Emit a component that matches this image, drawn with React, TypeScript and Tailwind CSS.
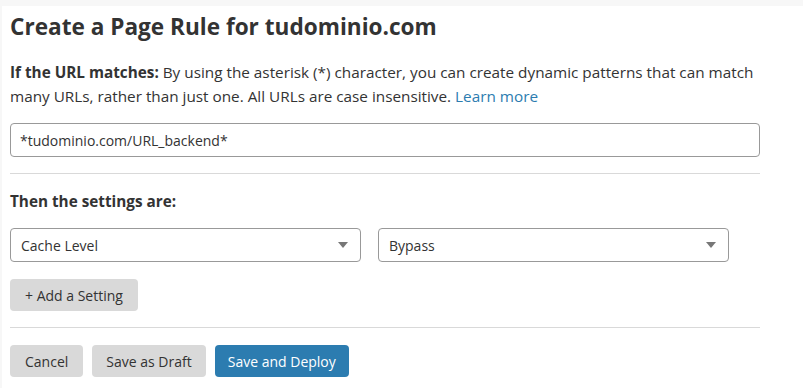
import React from 'react';

const font = { fontFamily: '"Open Sans", "Noto Sans", sans-serif' };

const Caret = () => (
  <svg width="10" height="6" viewBox="0 0 10 6" className="fill-[#777]">
    <path d="M0 0h10L5 6z" />
  </svg>
);

const SelectBox = ({ label }: { label: string }) => (
  <div className="flex h-[34px] w-[351px] items-center justify-between rounded border border-[#999] bg-white pl-[10px] pr-[12px] text-[14px] text-[#333]">
    <span>{label}</span>
    <Caret />
  </div>
);

const App: React.FC = () => {
  return (
    <div className="min-h-[388px] bg-[#f7f7f7] pt-[6px] pl-[2px]" style={font}>
      <div className="min-h-[382px] bg-white pl-[8px] pt-[3px] text-[#333]">
        <div className="w-[752px]">
          <h1 className="text-[22.6px] font-bold leading-[36px] text-[#333]">
            Create a Page Rule for tudominio.com
          </h1>

          <p className="mt-[15px] w-[750px] text-[15.3px] leading-[24px]">
            <span className="font-bold">If the URL matches:</span> By using the asterisk (*) character, you can create
            dynamic patterns that can match many URLs, rather than just one. All URLs are case insensitive.{' '}
            <a href="#" className="text-[#2c7cb0]">Learn more</a>
          </p>

          <div className="mt-[15px] flex h-[34px] w-[750px] items-center rounded border border-[#999] bg-white px-[9px] text-[14px]">
            *tudominio.com/URL_backend*
          </div>

          <hr className="mt-[16px] w-[750px] border-[#d9d9d9]" />

          <div className="mt-[15px] text-[15.3px] font-bold leading-[24px]">Then the settings are:</div>

          <div className="mt-[15px] flex gap-[17px]">
            <SelectBox label="Cache Level" />
            <SelectBox label="Bypass" />
          </div>

          <button className="mt-[17px] h-[32px] rounded bg-[#d9d9d9] px-[15px] text-[14px] text-[#333]">
            + Add a Setting
          </button>

          <hr className="mt-[16px] w-[750px] border-[#d9d9d9]" />

          <div className="mt-[17px] flex gap-[9px]">
            <button className="h-[32px] rounded bg-[#d9d9d9] px-[15px] text-[14px] text-[#333]">Cancel</button>
            <button className="h-[32px] rounded bg-[#d9d9d9] px-[14px] text-[14px] text-[#333]">Save as Draft</button>
            <button className="h-[32px] rounded bg-[#2c7cb0] px-[13px] text-[14px] text-white">Save and Deploy</button>
          </div>
        </div>
      </div>
    </div>
  );
};

export default App;
